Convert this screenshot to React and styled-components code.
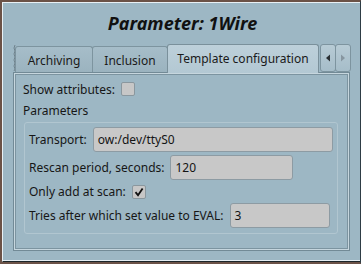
import React from 'react'
import styled, { createGlobalStyle, css } from 'styled-components'

const GlobalStyle = createGlobalStyle`
  html, body {
    margin: 0;
    padding: 0;
    background: #9db7c4;
  }
  body {
    font-family: "Noto Sans", "DejaVu Sans", sans-serif;
    font-size: 12px;
    color: #161616;
  }
`

const Window = styled.div`
  width: 361px;
  height: 264px;
  box-sizing: border-box;
  background: #9db7c4;
  border-top: 2px solid #6b5247;
  border-left: 2px solid #6b5247;
  border-bottom: 2px solid #6b5247;
  border-right: 1px solid #2e3d45;
`

const Frame = styled.div`
  height: 100%;
  box-sizing: border-box;
  display: flex;
  flex-direction: column;
  border-top: 1px solid #e9f1f5;
  border-left: 1px solid #e9f1f5;
  border-bottom: 1px solid #1c2529;
  box-shadow: inset 0 -1px 0 #e4edf2;
`

const Title = styled.div`
  height: 40px;
  display: flex;
  align-items: center;
  justify-content: center;
  font-size: 18px;
  font-weight: bold;
  font-style: italic;
  color: #111;
  padding-left: 2px;
`

const TabBar = styled.div`
  display: flex;
  align-items: flex-end;
  height: 29px;
  margin-left: 10px;
  position: relative;
  z-index: 1;
`

const TornEdge = styled.svg`
  width: 3px;
  height: 26px;
  margin-right: -1px;
  margin-bottom: 1px;
  flex: none;
`

const Tab = styled.div`
  box-sizing: border-box;
  width: ${p => p.$w}px;
  height: 26px;
  display: flex;
  align-items: center;
  justify-content: center;
  border: 1px solid #7d949f;
  border-bottom: none;
  border-radius: 3px 3px 0 0;
  background: linear-gradient(#a6bdc9, #9bb3bf);
  color: #1a1a1a;
  white-space: nowrap;
  margin-right: -1px;
  padding-top: 1px;
  ${p => p.$active && css`
    height: 29px;
    margin-bottom: -1px;
    padding-top: 0;
    padding-bottom: 2px;
    background: linear-gradient(#bdd0da, #b3c8d3);
    border-color: #7a909b;
    position: relative;
  `}
`

const ScrollButton = styled.div`
  box-sizing: border-box;
  width: 16px;
  height: 28px;
  margin-left: ${p => (p.$first ? '2px' : '-1px')};
  display: flex;
  align-items: center;
  justify-content: center;
  border: 1px solid #7d949f;
  border-radius: 3px;
  background: linear-gradient(#b7cbd5, #a6bdc9);
`

const Pane = styled.div`
  box-sizing: border-box;
  height: 179px;
  margin: 0 10px;
  border: 1px solid #728a96;
  box-shadow: inset 0 0 0 1px #c6d6de, inset 0 0 0 2px #7c94a0;
  padding: 8px 11px 0 9px;
  display: flex;
  flex-direction: column;
`

const Row = styled.div`
  display: flex;
  align-items: center;
  gap: 6px;
  height: ${p => p.$h || 25}px;
  flex: none;
`

const Label = styled.span`
  white-space: nowrap;
  color: #161616;
`

const SectionLabel = styled.div`
  height: 16px;
  line-height: 16px;
  margin-top: 6px;
`

const Group = styled.div`
  margin-top: 3px;
  margin-left: 1px;
  border: 1px solid #b1c6d0;
  border-radius: 3px;
  padding: 4px 4px 5px 4px;
  display: flex;
  flex-direction: column;
  gap: 3px;
`

const Field = styled.div`
  box-sizing: border-box;
  height: 25px;
  ${p => (p.$w ? css`width: ${p.$w}px;` : css`flex: 1;`)}
  background: #c8c8c8;
  border: 1px solid #8d9ba3;
  border-radius: 3px;
  padding: 0 4px;
  display: flex;
  align-items: center;
  color: #141414;
`

const Check = styled.div`
  box-sizing: border-box;
  width: 14px;
  height: 14px;
  background: #c7c7c7;
  border: 1px solid #8a979e;
  border-radius: 2px;
  display: flex;
  align-items: center;
  justify-content: center;
`

const CheckMark = () => (
  <svg width="10" height="10" viewBox="0 0 10 10">
    <path d="M1.5 5.2 L4 8.2 L8.6 1.4" fill="none" stroke="#111" strokeWidth="1.8" />
  </svg>
)

const Arrow = ({ dir, color }) => (
  <svg width="6" height="8" viewBox="0 0 6 8">
    {dir === 'left'
      ? <path d="M5 0.5 L1 4 L5 7.5 Z" fill={color} />
      : <path d="M1 0.5 L5 4 L1 7.5 Z" fill={color} />}
  </svg>
)

export default function App() {
  return (
    <>
      <GlobalStyle />
      <Window>
        <Frame>
          <Title>Parameter: 1Wire</Title>
          <TabBar>
            <TornEdge viewBox="0 0 3 26">
              <path d="M2 0 L1 3 L2 6 L1 9 L2 12 L1 15 L2 18 L1 21 L2 24 L1 26" fill="none" stroke="#6f828c" strokeWidth="1" />
            </TornEdge>
            <Tab $w={78}>Archiving</Tab>
            <Tab $w={76}>Inclusion</Tab>
            <Tab $w={152} $active>Template configuration</Tab>
            <ScrollButton $first><Arrow dir="left" color="#2a2f33" /></ScrollButton>
            <ScrollButton><Arrow dir="right" color="#8796a0" /></ScrollButton>
          </TabBar>
          <Pane>
            <Row $h={16}>
              <Label>Show attributes:</Label>
              <Check />
            </Row>
            <SectionLabel>Parameters</SectionLabel>
            <Group>
              <Row>
                <Label>Transport:</Label>
                <Field>ow:/dev/ttyS0</Field>
              </Row>
              <Row>
                <Label>Rescan period, seconds:</Label>
                <Field $w={123}>120</Field>
              </Row>
              <Row $h={17}>
                <Label>Only add at scan:</Label>
                <Check><CheckMark /></Check>
              </Row>
              <Row>
                <Label>Tries after which set value to EVAL:</Label>
                <Field $w={100}>3</Field>
              </Row>
            </Group>
          </Pane>
        </Frame>
      </Window>
    </>
  )
}
